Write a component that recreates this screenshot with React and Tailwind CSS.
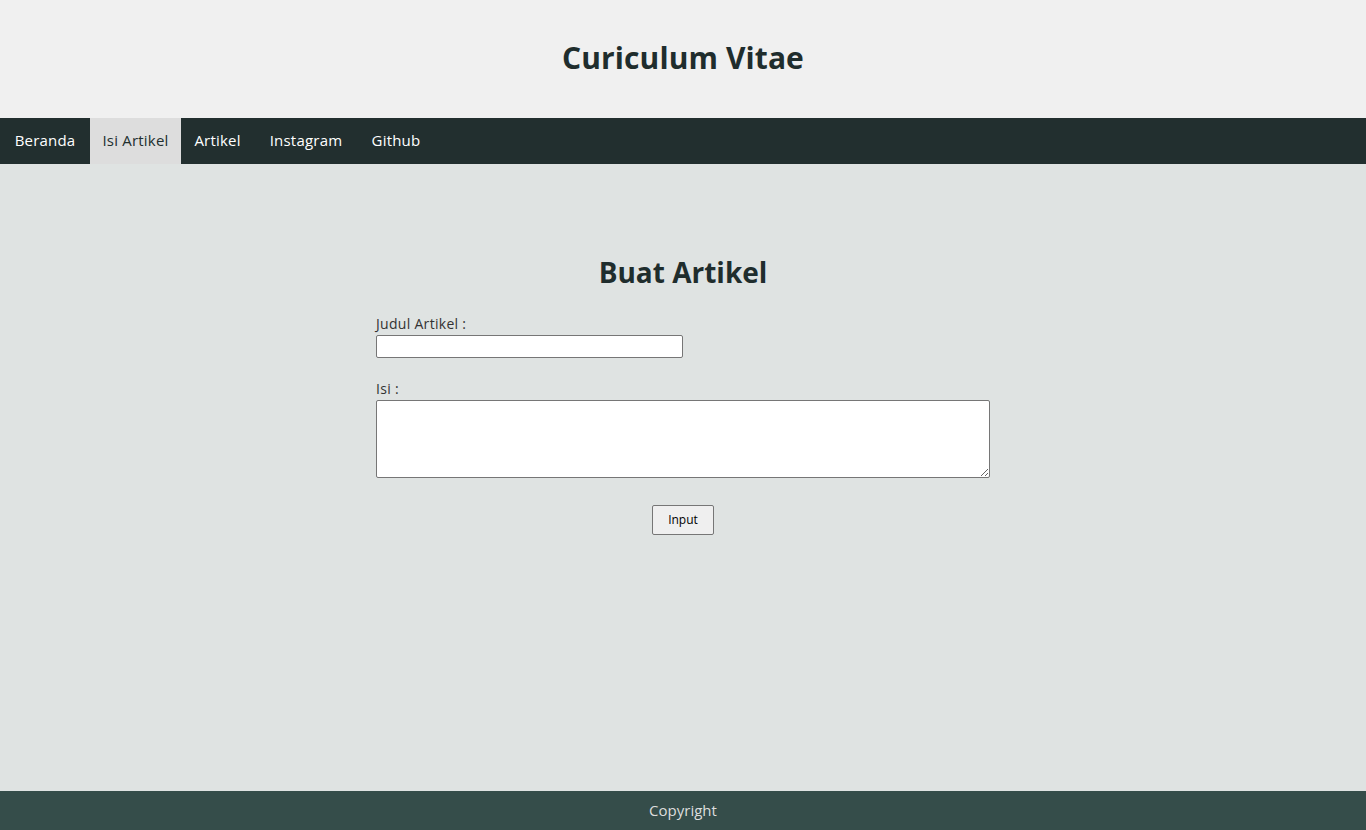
import React from 'react';

const menu = [
  { label: 'Beranda', w: 'w-[90px]' },
  { label: 'Isi Artikel', w: 'w-[91px]' },
  { label: 'Artikel', w: 'w-[73px]' },
  { label: 'Instagram', w: 'w-[104px]' },
  { label: 'Github', w: 'w-[76px]' },
];

export default function App() {
  return (
    <div className="flex flex-col h-screen font-['Open_Sans',sans-serif] text-[#1f2d2d]">
      <header className="h-[118px] shrink-0 bg-[#f0f0f0] flex items-center justify-center pb-[4px]">
        <h1 className="text-[30px] font-bold tracking-[0.1px]">Curiculum Vitae</h1>
      </header>

      <nav className="h-[46px] shrink-0 bg-[#222f2f] flex">
        {menu.map((item) => (
          <a
            key={item.label}
            href="#"
            className={
              item.label === 'Isi Artikel'
                ? `${item.w} flex items-center justify-center pb-[2px] text-[15px] tracking-[0.2px] bg-[#dddddd] text-[#222f2f]`
                : `${item.w} flex items-center justify-center pb-[2px] text-[15px] tracking-[0.2px] text-white`
            }
          >
            {item.label}
          </a>
        ))}
      </nav>

      <main className="flex-1 bg-[#dfe3e2] pt-[90px]">
        <div className="w-[614px] mx-auto">
          <h2 className="text-[28px] leading-[36px] font-bold text-center mb-[24px]">Buat Artikel</h2>
          <form>
            <label className="block text-[14px] leading-[20px] tracking-[0.3px] text-[#333]">Judul Artikel :</label>
            <input type="text" className="block mt-px w-[307px] h-[23px] bg-white border border-[#767676] rounded-[2px]" />
            <label className="block mt-[21px] text-[14px] leading-[20px] tracking-[0.3px] text-[#333]">Isi :</label>
            <textarea className="block mt-px w-[614px] h-[78px] bg-white border border-[#767676] rounded-[2px]" />
            <div className="flex justify-center mt-[27px]">
              <button type="button" className="w-[62px] h-[30px] text-[12px] bg-[#efefef] border border-[#767676] rounded-[2px] text-black">
                Input
              </button>
            </div>
          </form>
        </div>
      </main>

      <footer className="h-[39px] shrink-0 bg-[#354d4a] flex items-center justify-center pb-px text-[15px] text-[#dddddd]">
        Copyright
      </footer>
    </div>
  );
}
